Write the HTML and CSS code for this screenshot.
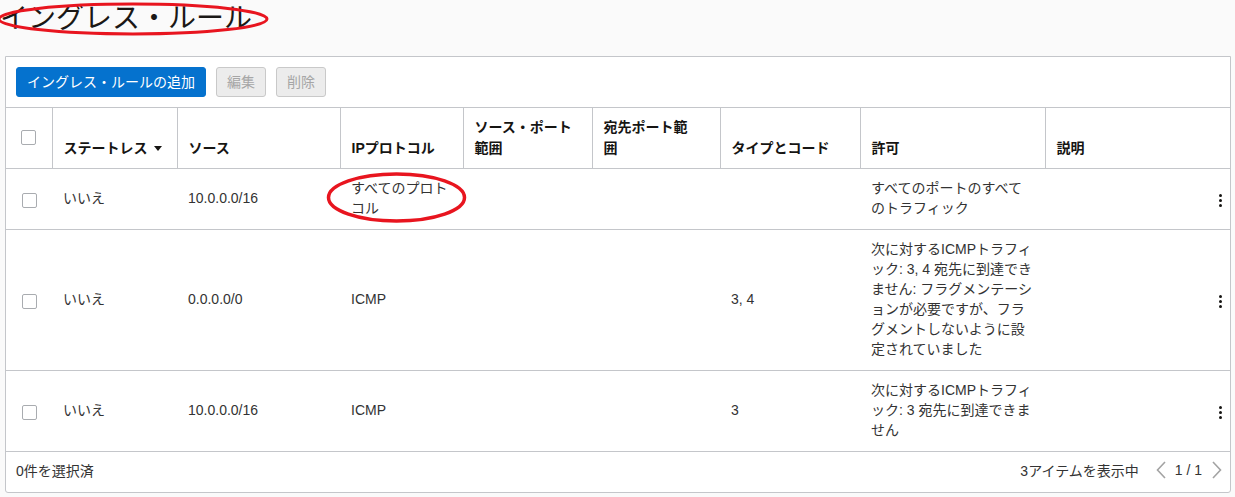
FILE: index.html
```html
<!DOCTYPE html>
<html lang="ja">
<head>
<meta charset="utf-8">
<title>イングレス・ルール</title>
<link rel="stylesheet" href="styles.css">
</head>
<body>
<svg class="annot" width="1235" height="497" viewBox="0 0 1235 497" aria-hidden="true">
  <ellipse cx="133" cy="19" rx="134" ry="15" fill="none" stroke="#e8151f" stroke-width="3"/>
  <ellipse cx="396.5" cy="197.5" rx="68" ry="23.5" fill="none" stroke="#e8151f" stroke-width="3.5"/>
</svg>
<h1 class="title">イングレス・ルール</h1>
<div class="panel">
  <div class="toolbar">
    <button class="btn btn-primary">イングレス・ルールの追加</button>
    <button class="btn btn-disabled">編集</button>
    <button class="btn btn-disabled">削除</button>
  </div>
  <table class="grid">
    <colgroup>
      <col class="c-check"><col class="c-state"><col class="c-src"><col class="c-proto"><col class="c-sport"><col class="c-dport"><col class="c-type"><col class="c-allow"><col class="c-desc"><col class="c-act">
    </colgroup>
    <thead>
      <tr>
        <th class="cell-check"><span class="checkbox"></span></th>
        <th class="bl">ステートレス<span class="sort"></span></th>
        <th class="bl">ソース</th>
        <th class="bl">IPプロトコル</th>
        <th class="bl">ソース・ポート<br>範囲</th>
        <th class="bl">宛先ポート範<br>囲</th>
        <th class="bl">タイプとコード</th>
        <th class="bl">許可</th>
        <th class="bl">説明</th>
        <th></th>
      </tr>
    </thead>
    <tbody>
      <tr>
        <td class="cell-check"><span class="checkbox"></span></td>
        <td>いいえ</td>
        <td>10.0.0.0/16</td>
        <td>すべてのプロト<br>コル</td>
        <td></td>
        <td></td>
        <td></td>
        <td>すべてのポートのすべて<br>のトラフィック</td>
        <td></td>
        <td class="cell-act"><span class="kebab"><i></i><i></i><i></i></span></td>
      </tr>
      <tr>
        <td class="cell-check"><span class="checkbox"></span></td>
        <td>いいえ</td>
        <td>0.0.0.0/0</td>
        <td>ICMP</td>
        <td></td>
        <td></td>
        <td>3, 4</td>
        <td>次に対するICMPトラフィ<br>ック: 3, 4 宛先に到達でき<br>ません: フラグメンテーシ<br>ョンが必要ですが、フラ<br>グメントしないように設<br>定されていました</td>
        <td></td>
        <td class="cell-act"><span class="kebab"><i></i><i></i><i></i></span></td>
      </tr>
      <tr>
        <td class="cell-check"><span class="checkbox"></span></td>
        <td>いいえ</td>
        <td>10.0.0.0/16</td>
        <td>ICMP</td>
        <td></td>
        <td></td>
        <td>3</td>
        <td>次に対するICMPトラフィ<br>ック: 3 宛先に到達できま<br>せん</td>
        <td></td>
        <td class="cell-act"><span class="kebab"><i></i><i></i><i></i></span></td>
      </tr>
    </tbody>
  </table>
  <div class="footer">
    <span class="selected">0件を選択済</span>
    <div class="pager">
      <span class="count">3アイテムを表示中</span>
      <svg class="chev" width="10" height="18" viewBox="0 0 10 18"><polyline points="9,1 1.5,9 9,17" fill="none" stroke="#a3a3a3" stroke-width="1.6"/></svg>
      <span class="pages">1 / 1</span>
      <svg class="chev" width="10" height="18" viewBox="0 0 10 18"><polyline points="1,1 8.5,9 1,17" fill="none" stroke="#a3a3a3" stroke-width="1.6"/></svg>
    </div>
  </div>
</div>
</body>
</html>
```
FILE: styles.css
```css
html, body {
  margin: 0;
  padding: 0;
}
body {
  background: #fafafa;
  font-family: "Liberation Sans", "Noto Sans CJK JP", sans-serif;
  font-size: 14px;
  color: #333333;
  width: 1235px;
  height: 497px;
  position: relative;
  overflow: hidden;
}
.annot {
  position: absolute;
  left: 0;
  top: 0;
  pointer-events: none;
  z-index: 5;
}
.title {
  margin: 0 0 18px 0;
  font-size: 28px;
  line-height: 38px;
  font-weight: 400;
  color: #1a1816;
}
.panel {
  margin-left: 5px;
  width: 1224px;
  background: #ffffff;
  border: 1px solid #c4c6ca;
  border-radius: 0 0 3px 3px;
}
.toolbar {
  display: flex;
  gap: 10px;
  padding: 10px 10px 10px 10px;
  border-bottom: 1px solid #c4c6ca;
}
.btn {
  height: 30px;
  font-family: inherit;
  font-size: 14px;
  border-radius: 3px;
  padding: 0 11px;
  margin: 0;
  line-height: 28px;
}
.btn-primary {
  background: #0572ce;
  border: 1px solid #0572ce;
  color: #ffffff;
  width: 190px;
  padding: 0;
}
.btn-disabled {
  background: #ececec;
  border: 1px solid #c9c9c9;
  color: #a6a6a6;
  width: 50px;
  padding: 0;
}
.grid {
  width: 1224px;
  border-collapse: collapse;
  table-layout: fixed;
}
.c-check { width: 46px; }
.c-state { width: 125px; }
.c-src { width: 163px; }
.c-proto { width: 123px; }
.c-sport { width: 129px; }
.c-dport { width: 128px; }
.c-type { width: 140px; }
.c-allow { width: 185px; }
.c-desc { width: 155px; }
.c-act { width: 30px; }
.grid th {
  text-align: left;
  font-weight: 700;
  color: #161513;
  line-height: 21px;
  padding: 9px 11px 9px 11px;
  vertical-align: bottom;
  border-bottom: 1px solid #c4c6ca;
  height: 42px;
  box-sizing: content-box;
  white-space: nowrap;
}
.grid th.bl {
  border-left: 1px solid #c4c6ca;
}
.grid td {
  padding: 9px 11px 11px 11px;
  line-height: 20px;
  vertical-align: middle;
  border-bottom: 1px solid #c4c6ca;
  white-space: nowrap;
}
.grid th.cell-check,
.grid td.cell-check {
  padding: 0;
  text-align: center;
  vertical-align: middle;
}
.grid th.cell-check {
  padding-bottom: 3px;
}
.checkbox {
  display: inline-block;
  width: 13px;
  height: 13px;
  border: 1px solid #a9acb0;
  border-radius: 2px;
  background: #ffffff;
  vertical-align: middle;
}
.sort {
  display: inline-block;
  width: 0;
  height: 0;
  border-left: 4px solid transparent;
  border-right: 4px solid transparent;
  border-top: 5px solid #161513;
  margin-left: 6px;
  vertical-align: middle;
  position: relative;
  top: -1px;
}
.grid td.cell-act {
  padding: 0 8px 0 0;
  text-align: right;
}
.kebab {
  display: inline-flex;
  flex-direction: column;
  gap: 2px;
  vertical-align: middle;
}
.kebab i {
  display: block;
  width: 3px;
  height: 3px;
  border-radius: 50%;
  background: #161513;
}
.footer {
  height: 40px;
  box-sizing: border-box;
  display: flex;
  align-items: center;
  justify-content: space-between;
  padding: 0 8px 4px 10px;
}
.pager {
  display: flex;
  align-items: center;
}
.count {
  margin-right: 17px;
}
.pages {
  margin: 0 10px 0 9px;
}
.chev {
  display: block;
}
```
